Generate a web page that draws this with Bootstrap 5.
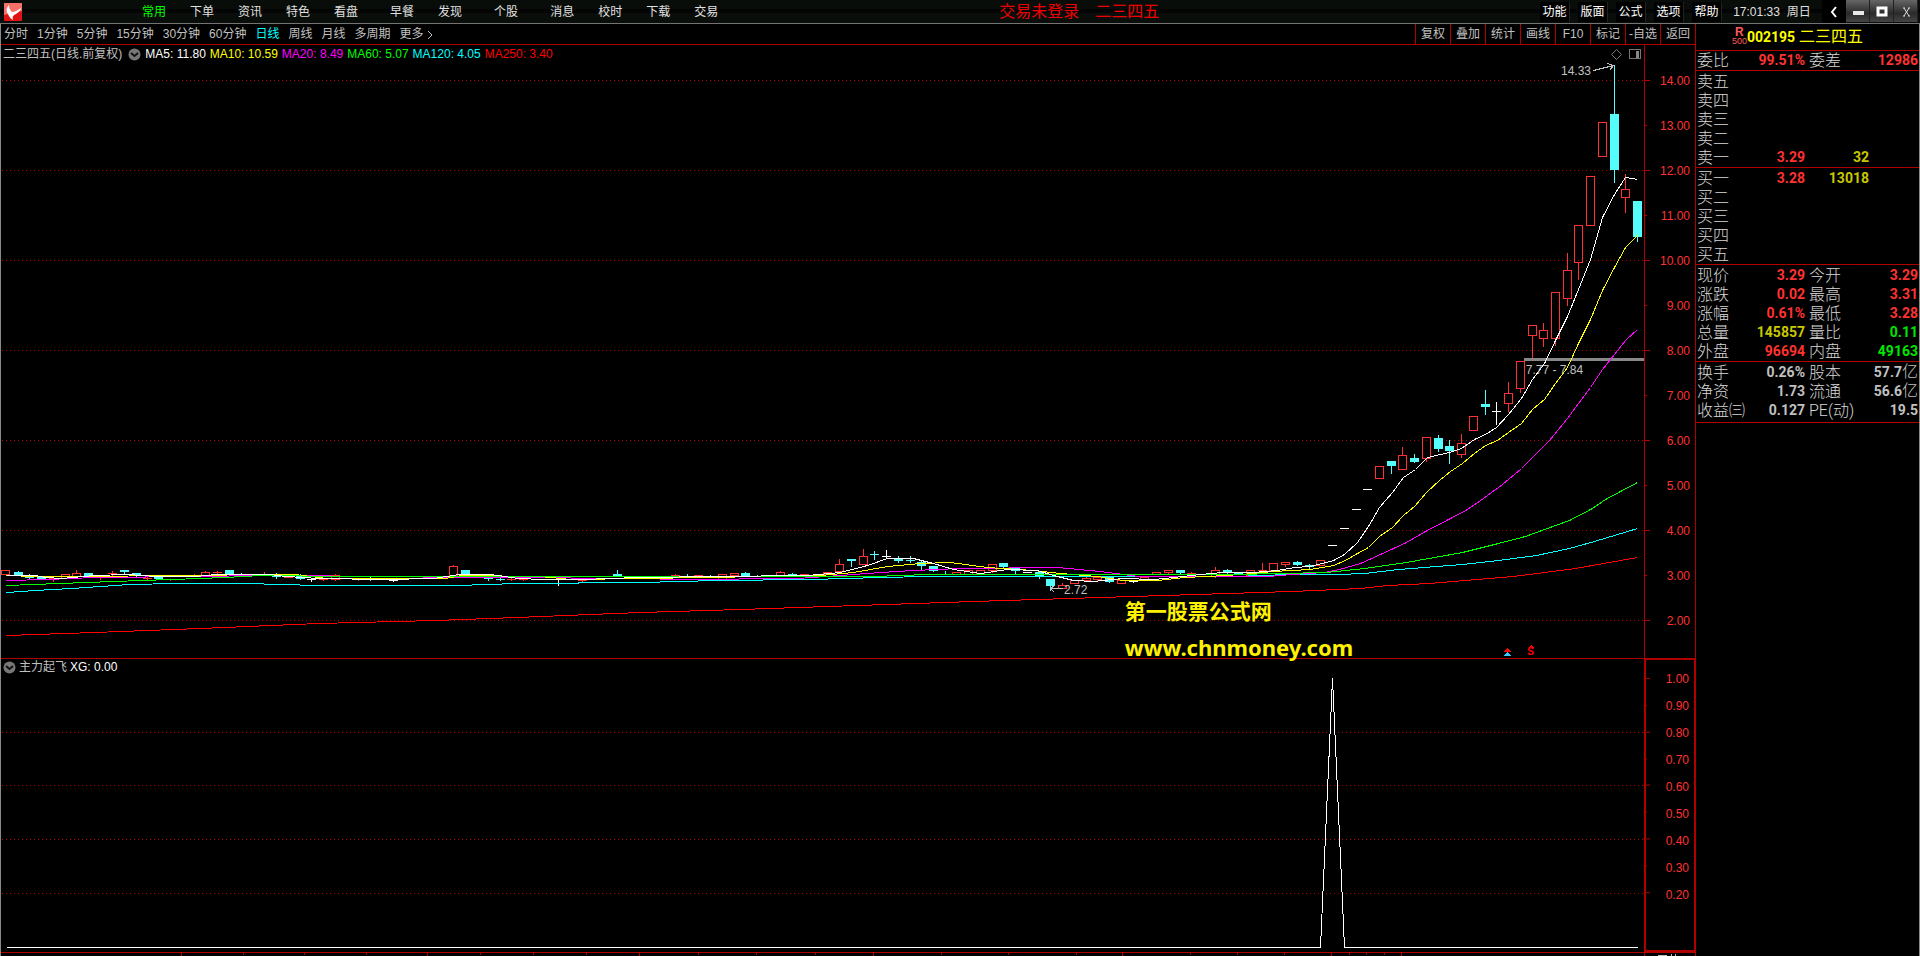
<!DOCTYPE html>
<html lang="zh-CN">
<head>
<meta charset="utf-8">
<meta name="viewport" content="width=device-width, initial-scale=1">
<title>二三四五 002195 日线</title>
<link href="https://cdn.jsdelivr.net/npm/bootstrap@5.3.0/dist/css/bootstrap.min.css" rel="stylesheet">
<style>
:root{--line:#b00000;--up:#ff3232;--down:#54fcfc;--txt:#c0c0c0}
body{background:#000;color:var(--txt);font:12px/18px "Liberation Sans","Noto Sans CJK SC",sans-serif}
a,button{color:inherit;text-decoration:none;white-space:nowrap}
button{background:none;border:0;padding:0}
.topbar{height:24px;background:linear-gradient(#090d09 0 9px,#030403 9px 13px,#0a0e0a 13px);border-bottom:1px solid #747474;color:#e0e0e0;padding-right:2px}
.logo-cell{width:142px;padding-left:4px}
.menu-groups{gap:32px}
.menu-group{gap:24px}
.lime{color:#00ff00}
.space-a{flex:31}.space-b{flex:42}
.login-note{color:#f00000;font-size:16px;gap:16px}
.sysmenu{gap:8px}
.sysmenu button{width:30px;height:20px;background:#000;border-right:1px solid #222;color:#fff}
.clock{width:100px;gap:7px}
.collapse-btn{width:24px;height:23px;background:#000}
.winbtn{width:24px;height:22px;background:linear-gradient(#666,#2a2a2a 60%,#444);border-right:1px solid #222}
.frame{border-left:1px solid #8a8a8a;border-right:1px solid #8a8a8a;min-height:0}
.toolbar{height:21px;border-bottom:1px solid var(--line)}
.periods{gap:9px;padding-left:3px}
.cyan{color:#00ffff}
.tools button{width:35px;height:20px;border-left:1px solid var(--line)}
.panes{min-height:0}
.pane-main{flex:613 1 0;min-height:0}
.pane-sub{flex:293 1 0;min-height:0;border-top:1px solid var(--line)}
.timeline-row{height:4px;border-top:1px solid var(--line);overflow:hidden}
.plot .canvas,.axis svg{position:absolute;inset:0;width:100%;height:100%;shape-rendering:crispEdges}
.plot-head{position:relative;z-index:1}
.indicators{gap:4px;padding-left:2px}
.indicators-main{padding-right:4px}
.indicators-main svg{margin-left:2px}
.indicators-sub{gap:3px;line-height:16px}
.ma5{color:#fff}.ma10{color:#ffff00}.ma20{color:#ff00ff}.ma60{color:#00ff00}.ma120{color:#00ffff}.ma250{color:#ff0000}
.axis{width:51px;border-left:1px solid var(--line);color:var(--up);text-align:right}
.axis-main{padding:13px 5px 15px 0}
.axis-sub{padding:6px 5px 42px 0;border:2px solid var(--line);border-top-width:1px;border-right-width:1px}
.axis span{flex:1;display:flex;align-items:center;justify-content:flex-end}
.pin{position:absolute;white-space:nowrap;line-height:14px}
.pin-high{right:53px;top:19px}
.pin-gap{left:92.8%;top:318px}
.pin-low{left:64.7%;top:538px}
.pin-split{left:92.9%;bottom:-1px;color:#ff0000;font-size:10px;font-weight:bold}
.watermark{position:absolute;left:68.4%;bottom:-7px;color:#fff200;font:bold 21px/36px "Noto Sans","Noto Sans CJK SC",sans-serif}
.watermark .site{font-size:22px}
.side{width:224px;border-left:1px solid var(--line)}
.side-head{height:27px;color:#ffff00;border-bottom:1px solid var(--line);font-size:16px;padding-right:20px}
.rflag{color:#ff5a5a;font-size:9px;line-height:9px;text-align:center}
.rflag b{font-size:12px;display:block}
.digits{font:bold 14px/19px Roboto,sans-serif}
.quote{width:100%;table-layout:fixed;border-collapse:separate;border-spacing:0;border-bottom:1px solid var(--line);padding-top:1px}
.quote-first{padding-top:0}
.quote-last{padding-bottom:2px}
.quote th,.quote td{height:19px;padding:0;white-space:nowrap;overflow:visible}
.quote th{font:300 16px/19px Roboto,"Noto Sans CJK SC",sans-serif;color:#d8d8d8;padding-left:1px}
.quote th+td+th{padding-left:3px}
.quote td{font:bold 14px/19px Roboto,"Noto Sans CJK SC",sans-serif;text-align:right;padding-right:1px}
.unit{font-weight:300;font-size:16px;line-height:16px}
.red{color:var(--up)}.gold{color:#c8c800}.grn{color:#00e600}
.quote col.w-name{width:50px}.quote col.w-val{width:60px}.quote col.w-vol{width:64px}
</style>
</head>
<body class="vh-100 overflow-hidden d-flex flex-column">

<header class="topbar d-flex align-items-center flex-shrink-0">
  <div class="logo-cell">
    <svg width="18" height="18" viewBox="0 0 18 18" class="d-block"><rect width="18" height="18" rx="1" fill="#e01414"/><path d="M0 0h18v8L0 12z" fill="#f47068"/><path d="M5 2C2 5 2 8 4 11c1 3 3 5 5 6-1-3 0-5 3-6 3-2 5-4 5-6-3 2-6 4-9 4C6 7 5 5 5 2z" fill="#fff"/></svg>
  </div>
  <nav class="menu-groups d-flex">
    <div class="menu-group d-flex"><a href="#" class="lime">常用</a><a href="#">下单</a><a href="#">资讯</a><a href="#">特色</a><a href="#">看盘</a></div>
    <div class="menu-group d-flex"><a href="#">早餐</a><a href="#">发现</a></div>
    <div class="menu-group d-flex"><a href="#">个股</a></div>
    <div class="menu-group d-flex"><a href="#">消息</a><a href="#">校时</a><a href="#">下载</a><a href="#">交易</a></div>
  </nav>
  <div class="space-a"></div>
  <div class="login-note d-flex text-nowrap"><span>交易未登录</span><span>二三四五</span></div>
  <div class="space-b"></div>
  <div class="sysmenu d-flex"><button>功能</button><button>版面</button><button>公式</button><button>选项</button><button>帮助</button></div>
  <div class="clock d-flex justify-content-center"><span>17:01:33</span><span>周日</span></div>
  <button class="collapse-btn" aria-label="收起"><svg width="8" height="12" viewBox="0 0 8 12"><path d="M6 1 2 6l4 5" fill="none" stroke="#fff" stroke-width="2"/></svg></button>
  <div class="d-flex align-self-start">
    <button class="winbtn" aria-label="最小化"><svg width="14" height="14" viewBox="0 0 14 14"><rect x="2" y="6" width="11" height="4" fill="#e8e8e8"/></svg></button>
    <button class="winbtn" aria-label="最大化"><svg width="14" height="14" viewBox="0 0 14 14"><rect x="3" y="3" width="8" height="7" fill="none" stroke="#fff" stroke-width="3"/></svg></button>
    <button class="winbtn" aria-label="关闭"><svg width="14" height="14" viewBox="0 0 14 14"><path d="M4 3h2M9 3h2M4 11h2M9 11h2M5 3l5 8M10 3l-5 8" fill="none" stroke="#ddd" stroke-width="1"/></svg></button>
  </div>
</header>

<div class="frame d-flex flex-grow-1">
  <main class="d-flex flex-column flex-grow-1 panes">
    <div class="toolbar d-flex justify-content-between flex-shrink-0">
      <nav class="periods d-flex align-items-center">
        <a href="#">分时</a><a href="#">1分钟</a><a href="#">5分钟</a><a href="#">15分钟</a><a href="#">30分钟</a><a href="#">60分钟</a><a href="#" class="cyan">日线</a><a href="#">周线</a><a href="#">月线</a><a href="#">多周期</a><a href="#">更多
        <svg width="6" height="10" viewBox="0 0 6 10"><path d="M1 1l4 4-4 4" fill="none" stroke="#c0c0c0"/></svg></a>
      </nav>
      <div class="tools d-flex"><button>复权</button><button>叠加</button><button>统计</button><button>画线</button><button>F10</button><button>标记</button><button>-自选</button><button>返回</button></div>
    </div>

    <section class="pane-main d-flex">
      <div class="plot position-relative flex-grow-1">
        <svg id="kline" class="canvas" viewBox="1 45 1643 613" preserveAspectRatio="none" aria-label="日线K线图"></svg>
        <div class="plot-head indicators indicators-main d-flex align-items-center">
          <span>二三四五(日线.前复权)</span>
          <svg width="13" height="13" viewBox="0 0 26 26" class="flex-shrink-0"><circle cx="13" cy="13" r="12" fill="#777"/><path d="M6 10l7 6 7-6" fill="none" stroke="#111" stroke-width="4"/></svg>
          <span class="ma5">MA5: 11.80</span><span class="ma10">MA10: 10.59</span><span class="ma20">MA20: 8.49</span><span class="ma60">MA60: 5.07</span><span class="ma120">MA120: 4.05</span><span class="ma250">MA250: 3.40</span>
        </div>
        <span class="pin pin-high">14.33</span>
        <span class="pin pin-gap">7.77 - 7.84</span>
        <span class="pin pin-low">2.72</span>
        <span class="pin pin-split">S</span>
        <div class="watermark"><div>第一股票公式网</div><div class="site">www.chnmoney.com</div></div>
      </div>
      <div class="axis axis-main position-relative d-flex flex-column flex-shrink-0">
        <svg viewBox="1645 45 50 613" preserveAspectRatio="none" id="ticksMain"></svg>
        <span>14.00</span><span>13.00</span><span>12.00</span><span>11.00</span><span>10.00</span><span>9.00</span><span>8.00</span><span>7.00</span><span>6.00</span><span>5.00</span><span>4.00</span><span>3.00</span><span>2.00</span>
      </div>
    </section>

    <section class="pane-sub d-flex">
      <div class="plot position-relative flex-grow-1">
        <svg id="signal" class="canvas" viewBox="1 659 1643 293" preserveAspectRatio="none" aria-label="主力起飞"></svg>
        <div class="plot-head indicators indicators-sub d-flex align-items-center">
          <svg width="13" height="13" viewBox="0 0 26 26" class="flex-shrink-0"><circle cx="13" cy="13" r="12" fill="#777"/><path d="M6 10l7 6 7-6" fill="none" stroke="#111" stroke-width="4"/></svg>
          <span>主力起飞</span><span class="ma5">XG: 0.00</span>
        </div>
      </div>
      <div class="axis axis-sub position-relative d-flex flex-column flex-shrink-0">
        <svg viewBox="1646 660 48 291" preserveAspectRatio="none" id="ticksSub"></svg>
        <span>1.00</span><span>0.90</span><span>0.80</span><span>0.70</span><span>0.60</span><span>0.50</span><span>0.40</span><span>0.30</span><span>0.20</span>
      </div>
    </section>
    <div class="timeline-row flex-shrink-0"><svg id="dates" class="d-block w-100" height="3" viewBox="1 953 1694 3" preserveAspectRatio="none"></svg></div>
  </main>

  <aside class="side flex-shrink-0">
    <div class="side-head d-flex align-items-center justify-content-center">
      <span class="rflag"><b>R</b>500</span><span class="digits">002195</span><span class="ms-1">二三四五</span>
    </div>
    <table class="quote quote-first"><colgroup><col class="w-name"><col class="w-val"><col class="w-name"><col></colgroup>
      <tr><th>委比</th><td class="red">99.51%</td><th>委差</th><td class="red">12986</td></tr></table>
    <table class="quote"><colgroup><col class="w-name"><col class="w-val"><col class="w-vol"><col></colgroup>
      <tr><th>卖五</th><td></td><td></td><td></td></tr><tr><th>卖四</th><td></td><td></td><td></td></tr><tr><th>卖三</th><td></td><td></td><td></td></tr><tr><th>卖二</th><td></td><td></td><td></td></tr>
      <tr><th>卖一</th><td class="red">3.29</td><td class="gold">32</td><td></td></tr></table>
    <table class="quote"><colgroup><col class="w-name"><col class="w-val"><col class="w-vol"><col></colgroup>
      <tr><th>买一</th><td class="red">3.28</td><td class="gold">13018</td><td></td></tr>
      <tr><th>买二</th><td></td><td></td><td></td></tr><tr><th>买三</th><td></td><td></td><td></td></tr><tr><th>买四</th><td></td><td></td><td></td></tr><tr><th>买五</th><td></td><td></td><td></td></tr></table>
    <table class="quote"><colgroup><col class="w-name"><col class="w-val"><col class="w-name"><col></colgroup>
      <tr><th>现价</th><td class="red">3.29</td><th>今开</th><td class="red">3.29</td></tr>
      <tr><th>涨跌</th><td class="red">0.02</td><th>最高</th><td class="red">3.31</td></tr>
      <tr><th>涨幅</th><td class="red">0.61%</td><th>最低</th><td class="red">3.28</td></tr>
      <tr><th>总量</th><td class="gold">145857</td><th>量比</th><td class="grn">0.11</td></tr>
      <tr><th>外盘</th><td class="red">96694</td><th>内盘</th><td class="grn">49163</td></tr></table>
    <table class="quote quote-last"><colgroup><col class="w-name"><col class="w-val"><col class="w-name"><col></colgroup>
      <tr><th>换手</th><td>0.26%</td><th>股本</th><td>57.7<span class="unit">亿</span></td></tr>
      <tr><th>净资</th><td>1.73</td><th>流通</th><td>56.6<span class="unit">亿</span></td></tr>
      <tr><th>收益㈢</th><td>0.127</td><th>PE(动)</th><td>19.5</td></tr></table>
  </aside>
</div>

<script src="https://cdn.jsdelivr.net/npm/bootstrap@5.3.0/dist/js/bootstrap.bundle.min.js"></script>
<script>
const LINE = '#b00000', UP = '#ff3232', DOWN = '#54fcfc';
const path = (d, stroke, extra = '') => `<path d="${d}" fill="none" stroke="${stroke}" ${extra}/>`;
const poly = (pts, c) => `<polyline points="${pts}" transform="translate(.5 .5)" fill="none" stroke="${c}"/>`;

// kind, centre, high, body top, body bottom, low
const bars = `r 5 570 570 574 574|c 18 571 572 575 575|c 29 574 577 578 579|c 41 577 577 579 579|r 53 577 578 579 581|r 65 574 574 578 578|r 76 570 573 576 576|c 88 573 573 576 576|r 100 577 577 578 579|r 112 571 573 574 575|c 124 570 570 572 573|c 136 573 573 575 577|r 147 576 578 579 579|c 158 577 577 579 579|r 170 579 579 580 580|r 194 574 575 576 576|r 205 571 572 576 576|r 217 571 572 573 574|c 229 570 570 574 574|c 241 573 574 574 574|r 264 572 574 574 574|c 276 573 574 577 578|r 288 575 575 577 577|c 300 574 576 579 579|w 311 579 579 580 581|r 323 579 579 580 580|r 335 574 575 579 580|r 358 579 579 580 580|c 370 577 578 579 580|w 393 579 580 580 581|c 440 576 576 577 577|r 453 565 566 575 575|c 465 570 570 574 574|c 477 574 575 576 576|c 488 577 578 578 580|c 500 578 579 580 580|r 511 578 579 580 580|r 523 579 579 580 580|w 558 576 579 579 585|r 582 580 580 581 582|r 594 578 578 579 579|c 617 570 574 576 576|r 675 574 575 576 576|c 687 574 576 576 576|r 698 575 575 576 576|c 710 575 576 577 577|r 722 574 574 579 579|r 734 573 573 575 577|c 745 572 573 576 576|c 757 575 576 576 576|r 780 571 572 575 575|c 792 573 574 575 575|r 804 574 574 575 575|r 827 572 572 574 574|r 839 559 564 571 571|c 851 559 559 561 566|r 863 549 556 564 564|c 874 551 554 554 559|w 886 550 556 556 558|c 898 556 559 561 562|c 910 556 560 560 562|c 921 561 562 566 569|c 933 566 566 571 571|c 945 571 574 574 574|r 956 572 572 574 574|r 968 570 570 574 574|r 980 570 570 573 573|r 992 564 564 570 572|c 1003 563 563 567 567|c 1015 568 568 571 574|w 1027 572 572 572 572|c 1039 572 572 577 578|c 1050 579 579 586 590|r 1062 583 585 588 588|r 1074 580 580 583 583|r 1086 576 578 580 580|r 1097 577 577 579 581|c 1109 577 577 582 582|r 1121 580 580 583 583|w 1133 581 581 581 582|r 1144 577 577 579 579|r 1156 572 572 574 574|r 1168 570 570 572 574|c 1180 570 570 573 573|r 1191 572 573 574 574|r 1215 567 570 576 577|c 1227 569 570 573 573|c 1238 572 573 573 574|r 1250 570 570 575 575|r 1262 563 570 571 571|r 1273 563 563 570 570|r 1285 562 562 564 566|c 1297 561 562 565 565|c 1309 564 565 567 568|r 1320 560 560 565 565|w 1332 545 545 545 545|w 1344 528 528 528 528|w 1356 509 509 509 509|w 1367 489 489 489 489|r 1379 466 466 478 478|c 1391 461 461 466 473|r 1402 447 455 469 469|c 1414 454 458 462 462|r 1426 437 437 458 461|c 1438 435 438 449 451|c 1449 440 446 451 463|r 1461 434 443 454 457|r 1473 416 416 430 430|c 1485 390 404 407 414|w 1496 402 411 411 424|r 1508 382 393 403 411|r 1520 361 361 388 392|r 1532 325 325 335 357|r 1543 323 330 338 346|r 1555 292 292 338 345|r 1567 253 270 298 305|r 1578 225 225 262 279|r 1590 176 176 225 225|r 1602 122 122 156 156|c 1614 65 114 170 182|r 1625 174 189 197 212|c 1637 201 201 237 241`;

const averages = [
['#ff0000','6,635 94,632 200,628 318,623 435,620 516,617 640,612 740,609 857,605 973,601 1100,597 1196,594 1291,591 1360,588 1387,585 1429,583 1513,576 1575,568 1637,557'],
['#00ffff','6,592 35,590 71,588 129,584 176,583 245,583 318,585 457,585 516,583 640,582 717,580 810,579 880,577 927,576 1140,576 1234,576 1288,574 1337,574 1364,573 1398,569 1462,564 1498,560 1536,555 1569,548 1594,541 1637,528'],
['#ff00ff','6,580 47,579 94,577 196,576 261,575 318,575 343,576 500,577 640,578 680,579 797,578 840,575 880,572 913,570 960,568 1057,567 1100,571 1138,576 1268,576 1291,574 1324,572 1339,569 1360,563 1380,554 1406,542 1425,531 1450,518 1467,509 1483,498 1502,484 1521,468 1534,455 1549,440 1567,418 1578,403 1590,387 1602,369 1614,354 1625,340 1637,329'],
['#ffff00','6,575 35,576 94,576 163,575 294,574 327,578 445,578 461,575 539,576 571,579 640,578 707,577 820,575 853,572 887,566 920,563 950,562 987,567 1033,570 1060,573 1097,576 1123,580 1157,580 1184,577 1226,575 1253,573 1272,571 1310,569 1333,565 1345,560 1357,553 1368,547 1379,536 1392,527 1403,515 1414,506 1426,492 1439,480 1450,471 1462,463 1474,453 1485,445 1497,440 1508,432 1521,423 1532,409 1544,399 1555,383 1567,367 1578,343 1590,319 1602,290 1614,267 1625,247 1637,235'],
['#00ff00','6,585 59,583 141,580 200,578 224,577 261,575 339,576 640,576 873,576 927,574 1234,574 1280,573 1326,572 1364,568 1406,562 1462,552 1498,543 1525,536 1544,529 1569,520 1592,508 1605,499 1637,482'],
['#ffffff','6,575 35,575 45,577 61,578 94,575 127,574 155,576 196,576 216,574 269,574 286,576 318,578 384,579 433,578 459,574 490,574 518,578 543,579 584,579 608,578 640,577 717,576 807,575 840,572 867,565 887,558 913,558 933,563 953,569 980,573 1007,569 1037,570 1053,575 1073,580 1093,581 1123,578 1154,579 1173,577 1200,574 1222,572 1253,572 1276,570 1295,567 1309,566 1322,563 1333,560 1344,554 1357,542 1368,526 1379,507 1392,492 1403,477 1415,469 1427,457 1440,454 1449,452 1461,448 1474,439 1485,434 1496,427 1508,414 1521,398 1532,379 1544,363 1555,340 1567,316 1578,289 1590,259 1602,217 1614,194 1625,177 1637,179']];

const grid = ys => ys.map(y => path(`M2 ${y + .5}H1644`, LINE, 'stroke-dasharray="1 3"')).join('');
const candle = s => {
  const f = s.split(' '), k = f[0], [x, hi, t, b, lo] = f.slice(1).map(Number);
  const c = k === 'r' ? UP : k === 'c' ? DOWN : '#fff';
  const wick = (a, z) => z > a ? `<rect x="${x}" y="${a}" width="1" height="${z - a}" fill="${c}"/>` : '';
  if (k === 'r' && b - t > 1)
    return wick(hi, t) + wick(b + 1, lo + 1) + `<rect x="${x - 3.5}" y="${t + .5}" width="8" height="${b - t}" fill="none" stroke="${c}"/>`;
  return wick(hi, lo + 1) + `<rect x="${x - 4}" y="${t}" width="9" height="${Math.max(1, b - t)}" fill="${c}"/>`;
};

document.getElementById('kline').innerHTML =
  grid([80, 170, 260, 350, 440, 530, 620]) +
  '<rect x="1524" y="358" width="120" height="3" fill="#888"/>' +
  bars.split('|').map(candle).join('') +
  averages.map(([c, p]) => poly(p, c)).join('') +
  path('M1593.500 70.500L1613.500 65.500M1607.500 63.500L1613.500 65.500L1609.500 70.500', '#c0c0c0') +
  path('M1062.500 588.500H1050.500M1054.500 585.500L1050.500 588.500L1054.500 592.500', '#c0c0c0') +
  path('M1616.500 49.500l5 5-5 5-5-5z', '#777', 'shape-rendering="auto"') +
  path('M1629.500 49.500h11v9h-11z', '#777') + '<rect x="1636" y="51" width="3" height="7" fill="#888"/>' +
  '<path d="M1503 652l4-4 4 4z" fill="#f00"/><path d="M1503 656l4-4 4 4z" fill="#3cf"/>' +
  '<path d="M1528 648l3-3 3 3z" fill="#f00"/>';

document.getElementById('ticksMain').innerHTML =
  Array.from({length: 13}, (_, i) => path(`M1645 ${80.5 + i * 45}h${i % 2 ? 2 : 5}`, LINE)).join('');

document.getElementById('signal').innerHTML =
  grid([732, 785, 839, 893]) + poly('6,947 1320,947 1332,678 1344,947 1637,947', '#fff');
document.getElementById('ticksSub').innerHTML =
  [678, 705, 732, 759, 785, 812, 839, 866, 893].map((y, i) => path(`M1646 ${y + .5}h${i % 2 ? 1 : 4}`, LINE)).join('');
document.getElementById('dates').innerHTML =
  [181,243,304,366,427,480,533,586,639,698,756,815,873,941,1008,1076,1122,1190,1237,1284,1331,1349,1366,1384,1401,1644]
  .map(x => `<rect x="${x}" y="953" width="1" height="${[181,427,639,873,1122,1331,1401,1644].includes(x) ? 3 : 2}" fill="${LINE}"/>`).join('') +
  '<path d="M1658 955h9v1h-9zM1671 954h1v2h-1zM1675 954h1v2h-1z" fill="#c0c0c0"/>';
</script>
</body>
</html>
